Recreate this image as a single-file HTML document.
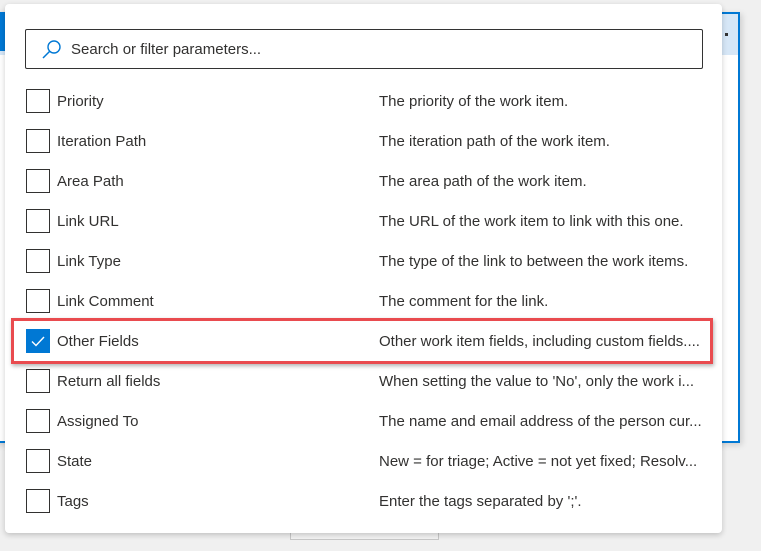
<!DOCTYPE html>
<html><head><style>
body{margin:0;width:761px;height:551px;background:#f0f0f0;position:relative;overflow:hidden;font-family:"Liberation Sans",sans-serif;}
.card{position:absolute;left:-10px;top:12px;width:746px;height:427px;border:2px solid #0078d4;background:#fff;box-shadow:2px 2px 6px rgba(0,0,0,.15)}
.hdr{position:absolute;left:0;top:0;right:0;height:41px;background:#d6e7f7}
.blu{position:absolute;left:0;top:14px;width:6px;height:37px;background:#0078d4}
.dot{position:absolute;right:10px;top:19px;width:3px;height:3px;background:#333}
.btm{position:absolute;left:290px;top:530px;width:147px;height:8px;border:1px solid #c8c8c8;background:#f4f4f4}
.panel{position:absolute;left:5px;top:4px;width:717px;height:529px;background:#fff;border-radius:4px;box-shadow:0 2px 6px rgba(0,0,0,.2)}
.search{position:absolute;left:20px;top:25px;width:676px;height:38px;border:1px solid #333;border-radius:2px}
.search span{position:absolute;left:45px;top:11px;font-size:15px;color:#323130}
.row{position:absolute;left:20px;height:24px;font-size:15px;color:#323130}
.cb{position:absolute;left:1px;top:0;width:22px;height:22px;border:1px solid #323130}
.cb.on{background:#0078d4;border-color:#0078d4}
.n{position:absolute;left:32px;top:4px;white-space:nowrap}
.d{position:absolute;left:354px;top:4px;white-space:nowrap}
.hl{position:absolute;left:6px;top:314px;width:696px;height:40px;border:3px solid #e94b4f;box-shadow:1px 2px 4px rgba(0,0,0,.3)}
</style></head><body>
<div class="card"><div class="hdr"><div class="dot"></div></div></div>
<div class="blu"></div>
<div class="btm"></div>
<div class="panel">
<div class="search"><svg style="position:absolute;left:15px;top:9px" width="22" height="22" viewBox="0 0 22 22"><circle cx="13" cy="8" r="6" fill="none" stroke="#0078d4" stroke-width="1.4"/><line x1="8.5" y1="12.5" x2="2" y2="19" stroke="#0078d4" stroke-width="1.5"/></svg><span>Search or filter parameters...</span></div>
<div class="row" style="top:85px"><div class="cb"></div><div class="n">Priority</div><div class="d">The priority of the work item.</div></div>
<div class="row" style="top:125px"><div class="cb"></div><div class="n">Iteration Path</div><div class="d">The iteration path of the work item.</div></div>
<div class="row" style="top:165px"><div class="cb"></div><div class="n">Area Path</div><div class="d">The area path of the work item.</div></div>
<div class="row" style="top:205px"><div class="cb"></div><div class="n">Link URL</div><div class="d">The URL of the work item to link with this one.</div></div>
<div class="row" style="top:245px"><div class="cb"></div><div class="n">Link Type</div><div class="d">The type of the link to between the work items.</div></div>
<div class="row" style="top:285px"><div class="cb"></div><div class="n">Link Comment</div><div class="d">The comment for the link.</div></div>
<div class="row" style="top:325px"><div class="cb on"><svg width="22" height="22" viewBox="0 0 22 22"><path d="M5 11.5l4 4 8-8.5" fill="none" stroke="#fff" stroke-width="1.4"/></svg></div><div class="n">Other Fields</div><div class="d">Other work item fields, including custom fields....</div></div>
<div class="row" style="top:365px"><div class="cb"></div><div class="n">Return all fields</div><div class="d">When setting the value to 'No', only the work i...</div></div>
<div class="row" style="top:405px"><div class="cb"></div><div class="n">Assigned To</div><div class="d">The name and email address of the person cur...</div></div>
<div class="row" style="top:445px"><div class="cb"></div><div class="n">State</div><div class="d">New = for triage; Active = not yet fixed; Resolv...</div></div>
<div class="row" style="top:485px"><div class="cb"></div><div class="n">Tags</div><div class="d">Enter the tags separated by ';'.</div></div>
<div class="hl"></div>
</div>
</body></html>
